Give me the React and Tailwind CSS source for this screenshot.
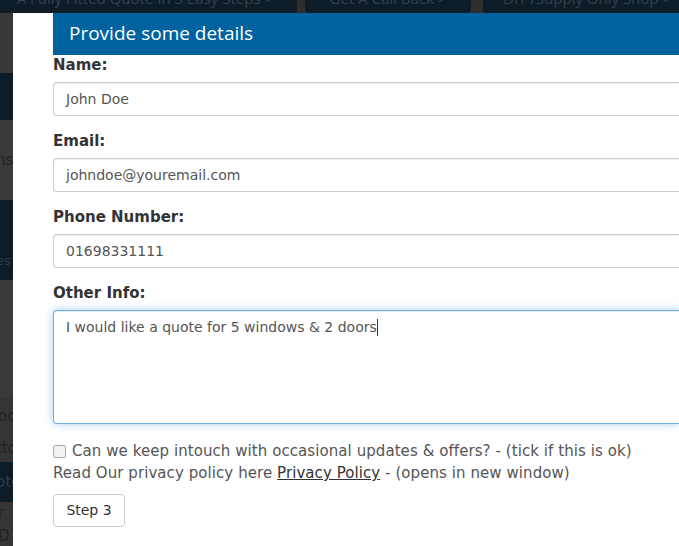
const fields = [
  { label: 'Name:', value: 'John Doe' },
  { label: 'Email:', value: 'johndoe@youremail.com' },
  { label: 'Phone Number:', value: '01698331111' },
];

const App = () => {
  return (
    <div className="w-[679px] h-[546px] overflow-hidden bg-[#333] flex flex-col font-['DejaVu_Sans',sans-serif]">
      {/* dimmed nav tabs behind the modal */}
      <div className="h-[13px] shrink-0 flex bg-[#2e2e2e] overflow-hidden text-[#34424e] text-[15px] font-['Open_Sans',sans-serif]">
        <div className="w-[297px] bg-[#0e1c28] rounded-br-[3px] flex justify-end pr-[24px]">
          <span className="-mt-[12px] leading-[20px] whitespace-nowrap">A Fully Fitted Quote In 3 Easy Steps &gt;</span>
        </div>
        <div className="w-[166px] ml-[8px] bg-[#0e1c28] rounded-b-[3px] flex justify-center">
          <span className="-mt-[12px] leading-[20px] whitespace-nowrap">Get A Call Back &gt;</span>
        </div>
        <div className="flex-1 ml-[12px] bg-[#0e1c28] rounded-bl-[3px] pl-[20px]">
          <span className="block -mt-[12px] leading-[20px] whitespace-nowrap">DIY /Supply Only Shop &gt;</span>
        </div>
      </div>

      <div className="flex flex-1">
        {/* dimmed page strip on the left */}
        <div className="w-[13px] shrink-0 flex flex-col text-[#2a2a2a] text-[15px] overflow-hidden">
          <div className="h-[107px] bg-[#383838] relative overflow-hidden">
            <div className="absolute left-0 top-[60px] w-[13px] h-[60px] bg-[#0e1c28]" />
          </div>
          <div className="h-[80px] bg-[#3a3a3a] flex items-center -ml-[4px] text-[#222]">ns</div>
          <div className="h-[80px] bg-[#0e1c28] flex items-end pb-[10px] -ml-[4px] text-[#2c3d4b] text-[13px]">es</div>
          <div className="h-[118px] bg-[#3a3a3a]" />
          <div className="h-[36px] bg-[#353535] flex items-center -ml-[2px] text-[#222]">oc</div>
          <div className="h-[28px] bg-[#353535] flex items-center -ml-[4px] text-[#222]">tto</div>
          <div className="h-[40px] bg-[#0e1c28] flex items-center -ml-[4px] text-[#2c3d4b]">ote</div>
          <div className="flex-1 bg-[#353535] -ml-[2px] text-[#222]">r D</div>
        </div>

        {/* modal */}
        <div className="flex-1 bg-white pl-[40px] flex flex-col">
          <div className="h-[42px] bg-[#00629e] flex items-center pl-[16px]">
            <h2 className="text-white text-[19px] font-['Open_Sans',sans-serif] leading-none -mt-[1px]">Provide some details</h2>
          </div>

          {fields.map((f) => (
            <div key={f.label} className="flex flex-col mb-[15px]">
              <label className="text-[#333] text-[15px] font-bold leading-[20px]">{f.label}</label>
              <div className="mt-[7px] h-[34px] border border-[#ccc] border-r-0 rounded-l-[4px] shadow-[inset_0_1px_1px_rgba(0,0,0,0.075)] flex items-center pl-[12px] text-[14px] text-[#555]">
                {f.value}
              </div>
            </div>
          ))}

          <div className="flex flex-col">
            <label className="text-[#333] text-[15px] font-bold leading-[20px]">Other Info:</label>
            <div className="mt-[7px] h-[114px] border border-[#66afe9] border-r-0 rounded-l-[4px] shadow-[inset_0_1px_1px_rgba(0,0,0,0.075),0_0_8px_rgba(102,175,233,0.6)] pl-[12px] pt-[6px] text-[14px] text-[#555] leading-[20px]">
              I would like a quote for 5 windows &amp; 2 doors<span className="inline-block w-px h-[17px] bg-[#333] align-middle -mt-[2px]" />
            </div>
          </div>

          <div className="mt-[16px] flex items-center text-[15px] text-[#555] leading-[22px] tracking-[0.07px]">
            <span className="w-[13px] h-[13px] border border-[#a9a9a9] rounded-[2px] bg-[#f3f3f3] mr-[6px]" />
            Can we keep intouch with occasional updates &amp; offers? - (tick if this is ok)
          </div>
          <div className="text-[15px] text-[#555] leading-[22px] tracking-[0.07px]">
            Read Our privacy policy here <span className="underline text-[#333]">Privacy Policy</span> - (opens in new window)
          </div>

          <button className="mt-[10px] self-start w-[72px] h-[33px] border border-[#ccc] rounded-[4px] bg-white text-[14px] text-[#333]">
            Step 3
          </button>
        </div>
      </div>
    </div>
  );
};

export default App;
